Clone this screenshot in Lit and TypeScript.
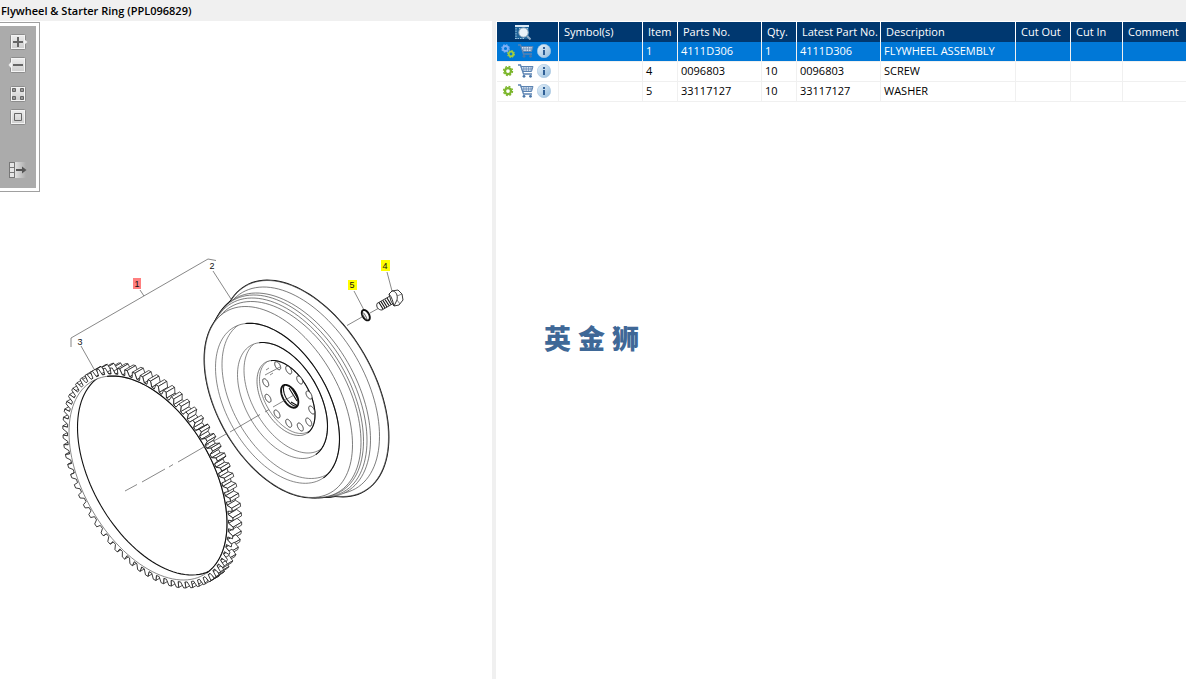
import { LitElement, html, svg, css } from "lit";
import { customElement, property, state } from "lit/decorators.js";
import { classMap } from "lit/directives/class-map.js";

type Pt = [number, number];
const fmt = (p: Pt) => `${p[0].toFixed(2)} ${p[1].toFixed(2)}`;
const AXIS = Math.PI / 3;

/* Point on a disc seen in isometric view, given by its half extents. */
function onDisc(cx: number, cy: number, hx: number, hy: number, t: number, k = 1): Pt {
  const sum = hx * hx + hy * hy;
  const diff = 2 * (hy * hy - hx * hx);
  const a = Math.sqrt((sum + diff) / 2) * k;
  const b = Math.sqrt((sum - diff) / 2) * k;
  const c = Math.cos(AXIS);
  const s = Math.sin(AXIS);
  const u = a * Math.cos(t);
  const v = b * Math.sin(t);
  return [cx + u * c - v * s, cy + u * s + v * c];
}

function disc(cx: number, cy: number, hx: number, hy: number): string {
  const pts: Pt[] = [];
  for (let i = 0; i < 120; i++) pts.push(onDisc(cx, cy, hx, hy, (i * Math.PI) / 60));
  return "M" + pts.map(fmt).join("L") + "Z";
}

/* The half of a disc outline that faces up and right. */
function arc(cx: number, cy: number, hx: number, hy: number): string {
  const pts: Pt[] = [];
  for (let i = 0; i <= 70; i++) pts.push(onDisc(cx, cy, hx, hy, -2.9 + (i / 70) * 2.85));
  return "M" + pts.map(fmt).join("L");
}

/* Starter ring: a toothed profile swept along the axis. */
const DEPTH: Pt = [8.5, -5];
const RING = [148, 478, 79, 102] as const;
function ring() {
  const n = 68;
  const p: Pt[] = [];
  for (let i = 0; i < n; i++) {
    const at = (f: number, k: number) => onDisc(...RING, ((i + f) * 2 * Math.PI) / n, k);
    p.push(at(0, 1.02), at(0.36, 1.02), at(0.5, 1.078), at(0.82, 1.078));
  }
  const sides: { d: string; y: number }[] = [];
  p.forEach((a, i) => {
    const b = p[(i + 1) % p.length];
    const nx = b[1] - a[1];
    const ny = -(b[0] - a[0]);
    if (nx * DEPTH[0] + ny * DEPTH[1] > 0) {
      const c: Pt = [b[0] + DEPTH[0], b[1] + DEPTH[1]];
      const e: Pt = [a[0] + DEPTH[0], a[1] + DEPTH[1]];
      const rank = i % 4 === 0 ? -1000 : 0;
      sides.push({ d: "M" + [a, b, c, e].map(fmt).join("L") + "Z", y: a[1] + rank });
    }
  });
  sides.sort((s, t) => s.y - t.y);
  return { front: "M" + p.map(fmt).join("L") + "Z", sides: sides.map((s) => s.d) };
}

const WHEEL: [number, number, number, number][] = [
  [305, 388.5, 83.5, 108],
  [299, 390.5, 80.5, 103.5],
  [291, 395, 79.5, 102],
  [288.5, 396, 78.5, 101],
  [286, 397.5, 77.5, 99.5],
  [284.5, 399.5, 76.5, 98],
  [278.5, 402, 74, 95.5],
];
const HOLES: Pt[] = [
  [277.7, 365.7], [288.7, 370], [299.7, 380], [309, 395], [311.7, 410], [308.7, 422],
  [300.3, 427], [288.7, 423.3], [277, 414], [268, 398.3], [265.7, 382.7],
];

@customElement("parts-drawing")
export class PartsDrawing extends LitElement {
  static styles = css`
    :host { display: block; }
    svg { display: block; width: 100%; height: auto; }
    .line { fill: none; stroke: #555; stroke-width: 0.7; }
    .solid { fill: #fff; stroke: #444; stroke-width: 0.7; }
    .dark { fill: #fff; stroke: #222; stroke-width: 0.9; }
    .bold { fill: none; stroke: #111; stroke-width: 1.1; }
    .edge { fill: #fff; stroke: #111; stroke-width: 1.9; }
    .side { fill: #fff; stroke: #1a1a1a; stroke-width: 0.75; stroke-linejoin: round; }
    .tooth { fill: #fff; stroke: #1a1a1a; stroke-width: 0.85; stroke-linejoin: round; }
    .hot { fill: #ff7f7f; }
    .tag { fill: #ff0; }
    text { font: 9px "Liberation Sans", Arial, sans-serif; text-anchor: middle; fill: #111; }
  `;
  render() {
    const r = ring();
    const hole = disc(...RING);
    return html`<svg viewBox="0 21 492 658" role="img" aria-label="Flywheel and starter ring exploded view">
      <defs>
        <clipPath id="bore"><path d=${hole}></path></clipPath>
        <clipPath id="c1"><path d=${disc(277.5, 403.3, 62, 80)}></path></clipPath>
        <clipPath id="c2"><path d=${disc(282.5, 400.5, 45, 58)}></path></clipPath>
        <clipPath id="c3"><path d=${disc(286, 398, 29, 37.5)}></path></clipPath>
        <clipPath id="c4"><path d=${disc(289.7, 396.3, 9, 11.8)}></path></clipPath>
      </defs>
      <path class="line" d="M71 347V338L208 259L216 260.500M140 290L144 296M213 271L231 299M81 346L94 369M387 272L392 291M354 291L364 310"></path>
      ${WHEEL.map((w) => svg`<path class="edge" d=${disc(...w)}></path>`)}
      ${WHEEL.map((w) => svg`<path class="solid" d=${disc(...w)}></path>`)}
      <path class="line" d=${disc(277.5, 403.3, 62, 80)}></path>
      <g clip-path="url(#c1)"><path class="line" d=${disc(284, 399, 62, 79.5)}></path></g>
      <path class="bold" d=${arc(277.5, 403.3, 62, 80)}></path>
      <path class="line" d=${disc(282.5, 400.5, 45, 58)}></path>
      <g clip-path="url(#c2)"><path class="line" d=${disc(288, 396, 44, 57)}></path></g>
      <path class="bold" d=${arc(282.5, 400.5, 45, 58)}></path>
      <path class="solid" d=${disc(286, 398, 29, 37.5)}></path>
      <g clip-path="url(#c3)"><path class="line" d=${disc(288, 396.5, 28.5, 37)}></path></g>
      <path class="bold" d=${arc(286, 398, 29, 37.5)}></path>
      ${HOLES.map(([x, y]) => svg`<path class="dark" d=${disc(x, y, 3, 4)}></path>`)}
      <path class="line" d="M265 375L280 367M266 370L269 368M270 375L273 373"></path>
      <path class="edge" d=${disc(289.7, 396.3, 8.6, 11.4)}></path>
      <g clip-path="url(#c4)">
        <path class="bold" d=${disc(292.5, 394.5, 9, 11.8)}></path>
        <path class="bold" d="M289 388L297 401M291 387L298 399M293 387L299 396M291 402L298 406"></path>
      </g>
      ${r.sides.map((d) => svg`<path class="side" d=${d}></path>`)}
      <path class="tooth" d=${r.front}></path>
      <path class="line" d=${hole}></path>
      <path class="bold" d=${arc(...RING)}></path>
      <g clip-path="url(#bore)">
        <path class="bold" d=${disc(RING[0] + DEPTH[0], RING[1] + DEPTH[1], 79, 102)}></path>
      </g>
      <path class="line" d="M125 491L137 484.500M142 482L165 469M169 467L173 464.500M178 462L209 444M213 441.500L226 434M230 432L260 414.500M265 412L269 409.500M273 407L294 395M347 325.500L362 317M370 313L379 308"></path>
      <g>
        <path class="dark" d="M377 303.500L390 296L394 303L382 310C378 310 376 307 377 303.500Z"></path>
        <path class="bold" d="M379 302.500L383 309M381 301.500L385 308M383 300.500L387 307M385 299.500L389 305.500M387 298L391 304.500"></path>
        <path class="dark" d="M389 294L392 291L398 290L402 294L403 300L399 305L394 306L391 301Z"></path>
        <path class="dark" d="M389 294C392 297 393 302 394 306L397 300C398 295 396 291 392 291Z"></path>
        <path class="line" d="M397 296L402 294M397 300L400 304"></path>
      </g>
      <path class="edge" d=${disc(365.8, 315.2, 4, 5.2)}></path>
      <path class="dark" d=${disc(364.6, 316, 2.2, 3.6)}></path>
      <rect class="hot" x="133" y="278" width="8" height="11"></rect>
      <rect class="tag" x="348" y="280" width="9" height="10"></rect>
      <rect class="tag" x="381" y="260" width="9" height="11"></rect>
      <text x="137" y="287">1</text>
      <text x="212" y="269">2</text>
      <text x="80" y="345">3</text>
      <text x="385" y="269">4</text>
      <text x="352" y="288">5</text>
    </svg>`;
  }
}

const gear = (color: string, cx: number, cy: number, r: number) => svg`
  <circle cx=${cx} cy=${cy} r=${r} fill="none" stroke=${color} stroke-width=${r * 0.75}></circle>
  <circle cx=${cx} cy=${cy} r=${r * 1.5} fill="none" stroke=${color} stroke-width=${r * 0.45}
    stroke-dasharray="${r * 0.65} ${r * 0.528}"></circle>`;

const cartIcon = html`<svg width="16" height="14" viewBox="0 0 16 14" aria-hidden="true">
  <path d="M0 1H2.500L5.500 10H14" fill="none" stroke="#5b83b2" stroke-width="1.300"></path>
  <path d="M3 2.500H15L13.500 7.500H4.800Z" fill="#d3e1ef" stroke="#5b83b2"></path>
  <path d="M5.800 3V7M8.200 3V7M10.600 3V7M13 3V7M4.500 5H14" stroke="#5b83b2" stroke-width="0.700"></path>
  <circle cx="6" cy="12.300" r="1.400" fill="#4a76a8"></circle>
  <circle cx="12.500" cy="12.300" r="1.400" fill="#4a76a8"></circle>
</svg>`;

const infoIcon = html`<svg width="14" height="14" viewBox="0 0 14 14" aria-hidden="true">
  <defs><linearGradient id="g" x1="0" y1="0" x2="1" y2="1">
    <stop offset="0" stop-color="#e8f2fa"></stop><stop offset="1" stop-color="#94bcdc"></stop>
  </linearGradient></defs>
  <circle cx="7" cy="7" r="6.700" fill="url(#g)" stroke="#a5c5e0" stroke-width="0.600"></circle>
  <path d="M6 6H8V11H6ZM6 3H8V5H6Z" fill="#2f5f96"></path>
</svg>`;

interface Part { item: string; no: string; qty: string; desc: string; assembly?: boolean }
const PARTS: Part[] = [
  { item: "1", no: "4111D306", qty: "1", desc: "FLYWHEEL ASSEMBLY", assembly: true },
  { item: "4", no: "0096803", qty: "10", desc: "SCREW" },
  { item: "5", no: "33117127", qty: "10", desc: "WASHER" },
];
const HEADS = ["Symbol(s)", "Item", "Parts No.", "Qty.", "Latest Part No.", "Description", "Cut Out", "Cut In", "Comment"];

@customElement("parts-table")
export class PartsTable extends LitElement {
  @state() private selected = "1";
  static styles = css`
    :host { display: block; }
    table { width: 100%; table-layout: fixed; border-collapse: separate; border-spacing: 0; }
    th, td { box-sizing: border-box; height: 20px; padding: 0 0 0 3px; text-align: left; white-space: nowrap; font-weight: 400; line-height: 17px; overflow: hidden; }
    th { padding-left: 5px; padding-bottom: 1px; background: #003870; color: #fff; border-right: 1px solid #fff; }
    td { padding-bottom: 2px; border-right: 1px solid #f0f0f0; border-bottom: 1px solid #f0f0f0; }
    th:last-child, td:last-child { border-right: 0; }
    .on td { background: #0078d7; color: #fff; }
    .icons { display: flex; align-items: center; gap: 3px; padding-left: 1px; }
    .find { display: flex; justify-content: center; padding-right: 14px; }
    button { display: block; padding: 0; border: 0; background: none; }
    svg { display: block; }
    .w-act { width: 62px; } .w-mid { width: 84px; } .w-num { width: 35px; }
    .w-desc { width: 135px; } .w-out { width: 55px; } .w-in { width: 52px; }
  `;
  render() {
    return html`<table>
      <colgroup>
        <col class="w-act"><col class="w-mid"><col class="w-num"><col class="w-mid"><col class="w-num">
        <col class="w-mid"><col class="w-desc"><col class="w-out"><col class="w-in"><col>
      </colgroup>
      <thead><tr>
        <th><div class="find"><button aria-label="Search parts">
          <svg width="16" height="16" viewBox="0 0 16 16">
            <path d="M0 1H14V15H0Z" fill="#1d6298"></path>
            <path d="M0 2H14" stroke="#d9e8f4" stroke-width="2"></path>
            <path d="M1 4V15M0 14.500H9M4 4.500H14" stroke="#9cc3df" stroke-dasharray="1.500 1"></path>
            <circle cx="8.500" cy="8.500" r="4.600" fill="#e9f2f8" stroke="#a9bccb"></circle>
            <path d="M12 12L15.500 15.500" stroke="#8fabc4" stroke-width="2"></path>
          </svg></button></div></th>
        ${HEADS.map((h) => html`<th>${h}</th>`)}
      </tr></thead>
      <tbody>
        ${PARTS.map((p) => html`<tr class=${classMap({ on: p.item === this.selected })} @click=${() => (this.selected = p.item)}>
          <td><div class="icons">
            <button aria-label="Part type"><svg width="14" height="14" viewBox="0 0 14 14">
              ${p.assembly
                ? [gear("#7fb0f5", 4.5, 4.5, 2.5), gear("#a4cf3c", 10, 10, 2.3)]
                : gear("#7cb62c", 7, 7, 3)}
            </svg></button>
            <button aria-label="Add to cart">${cartIcon}</button>
            <button aria-label="Part information">${infoIcon}</button>
          </div></td>
          <td></td><td>${p.item}</td><td>${p.no}</td><td>${p.qty}</td><td>${p.no}</td><td>${p.desc}</td>
          <td></td><td></td><td></td>
        </tr>`)}
      </tbody>
    </table>`;
  }
}

@customElement("tool-button")
export class ToolButton extends LitElement {
  @property() kind = "";
  @property() label = "";
  static styles = css`
    :host { display: block; }
    button { display: block; padding: 0; border: 0; background: none; }
    svg { display: block; }
    .dark { fill: none; stroke: #666; stroke-width: 2; }
    .thin { stroke-width: 1; }
    .box { fill: url(#f); stroke: #8c8c8c; }
    .shine { fill: none; stroke: #f4f4f4; }
  `;
  private glyph() {
    const box = svg`<rect class="box" x="2.500" y="0.500" width="15" height="15" rx="1"></rect><rect class="shine" x="3.500" y="1.500" width="13" height="13"></rect>`;
    switch (this.kind) {
      case "in": return svg`${box}<path d="M17 6L19.500 8L17 10Z" fill="#eee"></path><path class="dark" d="M5 8H15M10 3V13"></path>`;
      case "out": return svg`${box}<path d="M3 5L0.500 8L3 11Z" fill="#eee"></path><path class="dark" d="M5 8H15"></path>`;
      case "grid": return svg`${box}<path d="M4.500 2.500H7.500V5.500H4.500ZM12.500 2.500H15.500V5.500H12.500ZM4.500 10.500H7.500V13.500H4.500ZM12.500 10.500H15.500V13.500H12.500Z" fill="#999" stroke="#666"></path>`;
      case "fit": return svg`${box}<path class="dark thin" d="M6.500 4.500H13.500V11.500H6.500Z"></path>`;
      default: return svg`<rect x="1" y="0" width="17" height="16" fill="url(#h)"></rect>
        <path d="M1.500 0V16M6.500 0V16M1 0.500H7M1 5.500H6M1 10.500H6M1 15.500H7" stroke="#777"></path>
        <path d="M8 8H16" stroke="#555" stroke-width="2"></path><path d="M14 4.500L18.500 8L14 11.500Z" fill="#555"></path>`;
    }
  }
  render() {
    return html`<button aria-label=${this.label}><svg width="20" height="16" viewBox="0 0 20 16">
      <defs>
        <linearGradient id="f" x1="0" y1="0" x2="0" y2="1"><stop offset="0" stop-color="#eee"></stop><stop offset="1" stop-color="#ccc"></stop></linearGradient>
        <linearGradient id="h"><stop offset="0.300" stop-color="#e6e6e6"></stop><stop offset="1" stop-color="#ababab"></stop></linearGradient>
      </defs>${this.glyph()}</svg></button>`;
  }
}

@customElement("app-root")
export class AppRoot extends LitElement {
  static styles = css`
    :host { display: flex; flex-direction: column; min-height: 100vh; background: #f0f0f0; color: #000; font: 11px "Open Sans", "Noto Sans", sans-serif; }
    h1 { margin: 0; padding: 3px 1px 2px; font-size: 11px; line-height: 16px; font-weight: 600; }
    main { flex: 1; display: grid; grid-template-columns: minmax(0, 492fr) minmax(0, 690fr); gap: 4px; }
    .view { position: relative; background: #fff; }
    .tools { position: absolute; left: 0; top: 1px; padding: 3px 3px 3px 0; border: 1px solid #a0a0a0; border-left: 0; background: #fff; }
    .strip { display: flex; flex-direction: column; gap: 7px; padding: 8px 8px 10px; background: #ababab; }
    .group { margin-top: 6px; }
    .far { margin-top: 30px; }
    .list { display: flex; flex-direction: column; background: #fff; padding: 1px 0 0 1px; }
    .mark { display: flex; gap: 7px; margin: 216px 0 0 47px; color: #3f6897; font: 900 27px/40px "Noto Sans CJK SC", sans-serif; }
  `;
  render() {
    return html`
      <h1>Flywheel &amp; Starter Ring (PPL096829)</h1>
      <main>
        <section class="view">
          <parts-drawing></parts-drawing>
          <div class="tools"><div class="strip">
            <tool-button kind="in" label="Zoom in"></tool-button>
            <tool-button kind="out" label="Zoom out"></tool-button>
            <tool-button class="group" kind="grid" label="Fit page"></tool-button>
            <tool-button kind="fit" label="Actual size"></tool-button>
            <tool-button class="far" kind="hide" label="Toggle list"></tool-button>
          </div></div>
        </section>
        <section class="list">
          <parts-table></parts-table>
          <div class="mark" lang="zh-CN"><span>英</span><span>金</span><span>狮</span></div>
        </section>
      </main>`;
  }
}
